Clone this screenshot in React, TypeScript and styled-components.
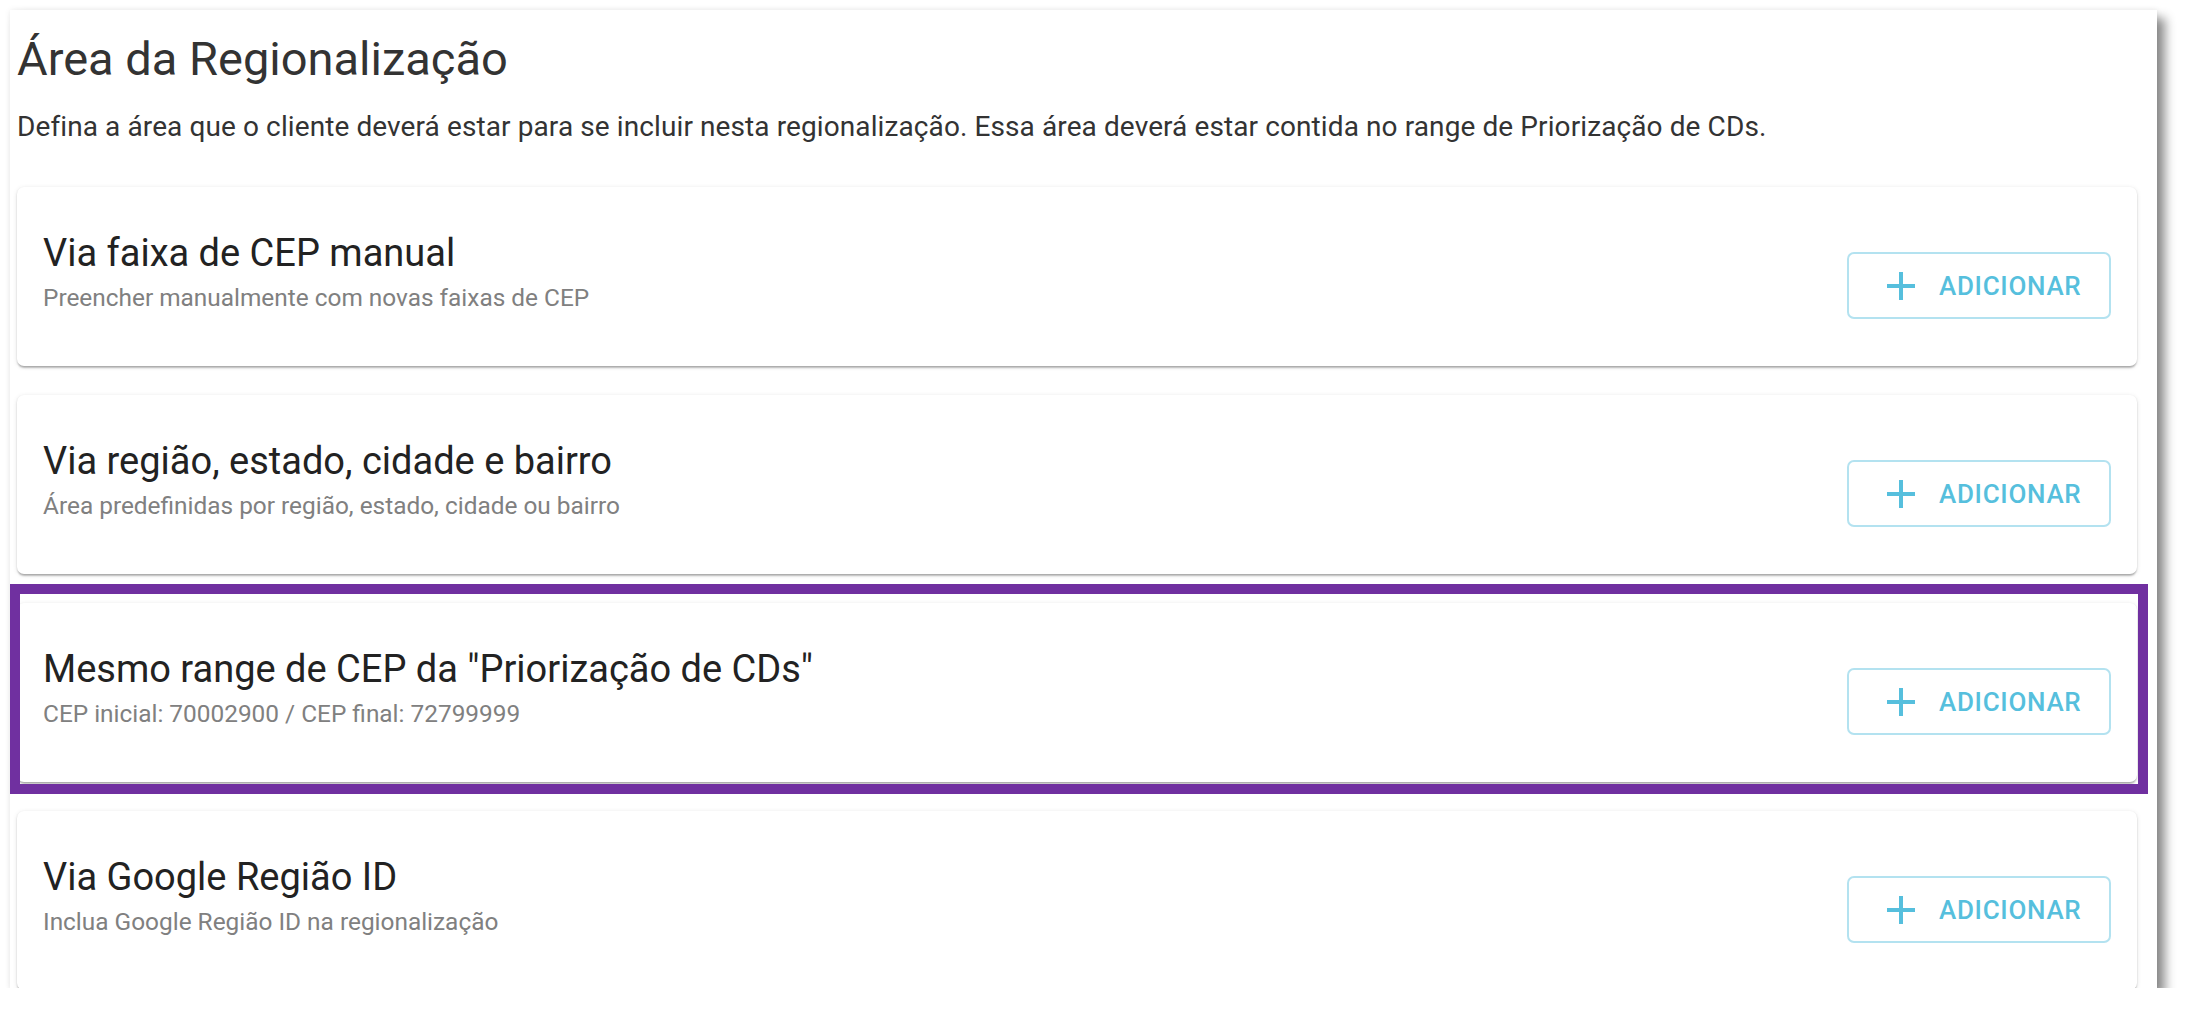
import styled, { createGlobalStyle } from "styled-components";

const GlobalStyle = createGlobalStyle`
	html, body {
		margin: 0;
		padding: 0;
		background: #fff;
		font-family: Roboto, "Liberation Sans", Arial, sans-serif;
	}
`;

const options = [
	{ title: 'Via faixa de CEP manual', subtitle: 'Preencher manualmente com novas faixas de CEP' },
	{ title: 'Via região, estado, cidade e bairro', subtitle: 'Área predefinidas por região, estado, cidade ou bairro' },
	{ title: 'Mesmo range de CEP da "Priorização de CDs"', subtitle: 'CEP inicial: 70002900 / CEP final: 72799999', highlighted: true },
	{ title: 'Via Google Região ID', subtitle: 'Inclua Google Região ID na regionalização' },
];

const PlusIcon = () => (
	<svg width="28" height="28" viewBox="0 0 28 28">
		<path d="M14 0v28M0 14h28" stroke="currentColor" strokeWidth="4" fill="none" />
	</svg>
);

const App = () => {
	return (
		<>
			<GlobalStyle />
			<Panel>
				<Title>Área da Regionalização</Title>
				<Description>
					Defina a área que o cliente deverá estar para se incluir nesta regionalização. Essa área deverá estar contida no range de Priorização de CDs.
				</Description>

				<CardList>
					{options.map(o => (
						<Card key={o.title} $highlighted={o.highlighted}>
							<CardText>
								<CardTitle>{o.title}</CardTitle>
								<CardSubtitle>{o.subtitle}</CardSubtitle>
							</CardText>
							<AddButton>
								<PlusIcon />
								<span>Adicionar</span>
							</AddButton>
						</Card>
					))}
				</CardList>
			</Panel>
		</>
	)
}

export default App;

const Panel = styled.main`
	box-sizing: border-box;
	margin: 10px 0 0 10px;
	width: 2147px;
	height: 978px;
	padding: 22px 20px 0 7px;
	background: #fff;
	overflow: hidden;
	box-shadow: 0 0 6px rgba(0, 0, 0, 0.08), 8px 8px 10px rgba(0, 0, 0, 0.45);
`;

const Title = styled.h1`
	margin: 0;
	font-size: 47px;
	line-height: 54px;
	font-weight: 400;
	color: #333;
`;

const Description = styled.p`
	margin: 25px 0 0;
	font-size: 28px;
	line-height: 32px;
	letter-spacing: 0.1px;
	color: #333;
`;

const CardList = styled.div`
	display: flex;
	flex-direction: column;
	gap: 29px;
	margin-top: 44px;
`;

const Card = styled.section<{ $highlighted?: boolean }>`
	position: relative;
	box-sizing: border-box;
	height: 179px;
	flex-shrink: 0;
	padding: 44px 26px 0;
	display: flex;
	justify-content: space-between;
	align-items: flex-start;
	background: #fff;
	border-radius: 7px;
	box-shadow: 0 3px 2px -1px rgba(0, 0, 0, 0.2), 0 1px 2px 0 rgba(0, 0, 0, 0.14), 0 1px 5px 0 rgba(0, 0, 0, 0.1);

	${p => p.$highlighted && `
		&::after {
			content: '';
			position: absolute;
			top: -19px;
			bottom: -12px;
			left: -7px;
			right: -11px;
			border: 10px solid #7030a0;
			pointer-events: none;
		}
	`}
`;

const CardText = styled.div`
	display: flex;
	flex-direction: column;
	gap: 9px;
`;

const CardTitle = styled.h2`
	margin: 0;
	font-size: 38px;
	line-height: 44px;
	font-weight: 400;
	color: #222;
`;

const CardSubtitle = styled.p`
	margin: 0;
	font-size: 24.4px;
	line-height: 28px;
	color: #808080;
`;

const AddButton = styled.button`
	box-sizing: border-box;
	margin-top: 21px;
	width: 264px;
	height: 67px;
	padding: 0 0 0 38px;
	display: flex;
	align-items: center;
	gap: 24px;
	background: #fff;
	border: 2px solid rgba(86, 191, 221, 0.45);
	border-radius: 7px;
	color: #56bfdd;
	font-family: Roboto, "Liberation Sans", Arial, sans-serif;
	font-size: 26px;
	font-weight: 500;
	letter-spacing: 0.7px;
	text-transform: uppercase;
	cursor: pointer;

	& svg {
		flex-shrink: 0;
	}
`;
